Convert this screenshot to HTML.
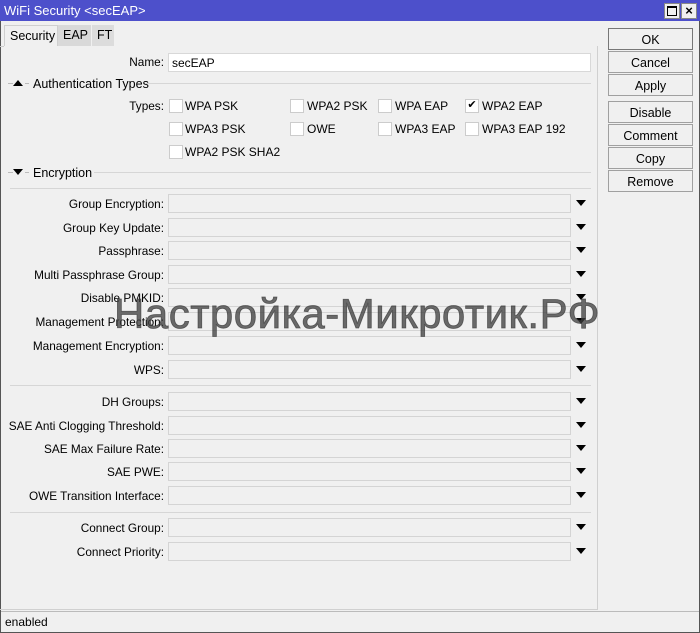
<!DOCTYPE html>
<html><head><meta charset="utf-8"><style>
*{margin:0;padding:0;box-sizing:border-box}
body{width:700px;height:633px;background:#f0f0f0;font-family:"Liberation Sans",Arial,sans-serif;font-size:12px;color:#000;position:relative;overflow:hidden}
.a{position:absolute}
.win{left:0;top:0;width:700px;height:633px;border:1px solid #555;border-top:none}
.title{left:0;top:0;width:700px;height:21px;background:#4d50cb;color:#fff;font-size:13px;padding:3px 0 0 4px}
.tb{top:3px;width:16px;height:16px;background:#f0f0f0;border:1px solid #888}
.tab{top:25px;height:21px;background:#d9d9d9;padding:3px 5px 0;font-size:12.5px}
.lbl{width:160px;text-align:right;left:4px;font-size:11.8px}
.fld{left:168px;width:403px;height:19px;border:1px solid #d4d4d4;background:#f0f0f0}
.arr{left:576px;width:0;height:0;border-left:5px solid transparent;border-right:5px solid transparent;border-top:6px solid #000}
.cb{width:14px;height:14px;background:#fff;border:1px solid #ccc}
.btn{left:608px;width:85px;height:22px;border:1px solid #a0a0a0;background:#f0f0f0;text-align:center;padding-top:4px;font-size:12.5px}
.hr{height:1px;background:#d6d6d6}
</style></head><body>
<div class="a win"></div>
<div class="a title">WiFi Security &lt;secEAP&gt;</div>
<div class="a tb" style="left:664px;"><div class="a" style="left:2px;top:2px;width:10px;height:10px;border:1px solid #000;border-top-width:2px"></div></div>
<div class="a tb" style="left:681px;font-size:13px;font-weight:bold;text-align:center;line-height:13px">×</div>
<div class="a tab" style="left:4px;width:54px;background:#f0f0f0;border:1px solid #cfcfcf;border-bottom:none">Security</div>
<div class="a tab" style="left:58px;width:33px">EAP</div>
<div class="a tab" style="left:91px;width:23px;background:#dcdcdc;border-left:1px solid #f0f0f0">FT</div>
<div class="a" style="left:597px;top:46px;width:1px;height:564px;background:#d0d0d0"></div>
<div class="a" style="left:0;top:46px;width:4px;height:1px;background:#ccc"></div>

<div class="a lbl" style="top:55px">Name:</div>
<div class="a" style="left:168px;top:53px;width:423px;height:19px;background:#fff;border:1px solid #d8d8d8;padding:2px 3px">secEAP</div>

<div class="a hr" style="left:8px;top:83px;width:5px;background:#bbb"></div>
<div class="a" style="left:13px;top:80px;border-left:5px solid transparent;border-right:5px solid transparent;border-bottom:6px solid #000"></div>
<div class="a hr" style="left:25px;top:83px;width:4px;background:#bbb"></div>
<div class="a" style="left:33px;top:77px;font-size:12.5px">Authentication Types</div>
<div class="a hr" style="left:145px;top:83px;width:446px"></div>

<div class="a lbl" style="top:99px">Types:</div>
<div class="a cb" style="left:169px;top:99px"></div><div class="a" style="left:185px;top:99px">WPA PSK</div>
<div class="a cb" style="left:290px;top:99px"></div><div class="a" style="left:307px;top:99px">WPA2 PSK</div>
<div class="a cb" style="left:378px;top:99px"></div><div class="a" style="left:395px;top:99px">WPA EAP</div>
<div class="a cb" style="left:465px;top:99px;font-size:11px;line-height:11px;text-align:center">✔</div><div class="a" style="left:482px;top:99px">WPA2 EAP</div>
<div class="a cb" style="left:169px;top:122px"></div><div class="a" style="left:185px;top:122px">WPA3 PSK</div>
<div class="a cb" style="left:290px;top:122px"></div><div class="a" style="left:307px;top:122px">OWE</div>
<div class="a cb" style="left:378px;top:122px"></div><div class="a" style="left:395px;top:122px">WPA3 EAP</div>
<div class="a cb" style="left:465px;top:122px"></div><div class="a" style="left:482px;top:122px">WPA3 EAP 192</div>
<div class="a cb" style="left:169px;top:145px"></div><div class="a" style="left:185px;top:145px">WPA2 PSK SHA2</div>

<div class="a hr" style="left:8px;top:172px;width:5px;background:#bbb"></div>
<div class="a" style="left:13px;top:169px;border-left:5px solid transparent;border-right:5px solid transparent;border-top:6px solid #000"></div>
<div class="a hr" style="left:25px;top:172px;width:4px;background:#bbb"></div>
<div class="a" style="left:33px;top:166px;font-size:12.5px">Encryption</div>
<div class="a hr" style="left:94px;top:172px;width:497px"></div>
<div class="a hr" style="left:10px;top:188px;width:581px"></div>

<div class="a lbl" style="top:197px">Group Encryption:</div><div class="a fld" style="top:194px"></div><div class="a arr" style="top:200px"></div>
<div class="a lbl" style="top:221px">Group Key Update:</div><div class="a fld" style="top:218px"></div><div class="a arr" style="top:224px"></div>
<div class="a lbl" style="top:244px">Passphrase:</div><div class="a fld" style="top:241px"></div><div class="a arr" style="top:247px"></div>
<div class="a lbl" style="top:268px">Multi Passphrase Group:</div><div class="a fld" style="top:265px"></div><div class="a arr" style="top:271px"></div>
<div class="a lbl" style="top:291px">Disable PMKID:</div><div class="a fld" style="top:288px"></div><div class="a arr" style="top:294px"></div>
<div class="a lbl" style="top:315px">Management Protection:</div><div class="a fld" style="top:312px"></div><div class="a arr" style="top:318px"></div>
<div class="a lbl" style="top:339px">Management Encryption:</div><div class="a fld" style="top:336px"></div><div class="a arr" style="top:342px"></div>
<div class="a lbl" style="top:363px">WPS:</div><div class="a fld" style="top:360px"></div><div class="a arr" style="top:366px"></div>
<div class="a hr" style="left:10px;top:385px;width:581px"></div>
<div class="a lbl" style="top:395px">DH Groups:</div><div class="a fld" style="top:392px"></div><div class="a arr" style="top:398px"></div>
<div class="a lbl" style="top:419px">SAE Anti Clogging Threshold:</div><div class="a fld" style="top:416px"></div><div class="a arr" style="top:422px"></div>
<div class="a lbl" style="top:442px">SAE Max Failure Rate:</div><div class="a fld" style="top:439px"></div><div class="a arr" style="top:445px"></div>
<div class="a lbl" style="top:465px">SAE PWE:</div><div class="a fld" style="top:462px"></div><div class="a arr" style="top:468px"></div>
<div class="a lbl" style="top:489px">OWE Transition Interface:</div><div class="a fld" style="top:486px"></div><div class="a arr" style="top:492px"></div>
<div class="a hr" style="left:10px;top:512px;width:581px"></div>
<div class="a lbl" style="top:521px">Connect Group:</div><div class="a fld" style="top:518px"></div><div class="a arr" style="top:524px"></div>
<div class="a lbl" style="top:545px">Connect Priority:</div><div class="a fld" style="top:542px"></div><div class="a arr" style="top:548px"></div>

<div class="a btn" style="top:28px;border-color:#777">OK</div>
<div class="a btn" style="top:51px">Cancel</div>
<div class="a btn" style="top:74px">Apply</div>
<div class="a btn" style="top:101px">Disable</div>
<div class="a btn" style="top:124px">Comment</div>
<div class="a btn" style="top:147px">Copy</div>
<div class="a btn" style="top:170px">Remove</div>

<div class="a" style="left:0;top:609px;width:598px;height:1px;background:#d0d0d0"></div>
<div class="a" style="left:1px;top:611px;width:698px;height:21px;border-top:1px solid #bbb;background:#f0f0f0;padding:3px 0 0 4px">enabled</div>

<div class="a" style="left:114px;top:290px;font-size:42px;color:rgba(60,60,60,0.75);white-space:nowrap;letter-spacing:0.5px;-webkit-text-stroke:0.8px rgba(60,60,60,0.75)">Настройка-Микротик.РФ</div>
</body></html>
